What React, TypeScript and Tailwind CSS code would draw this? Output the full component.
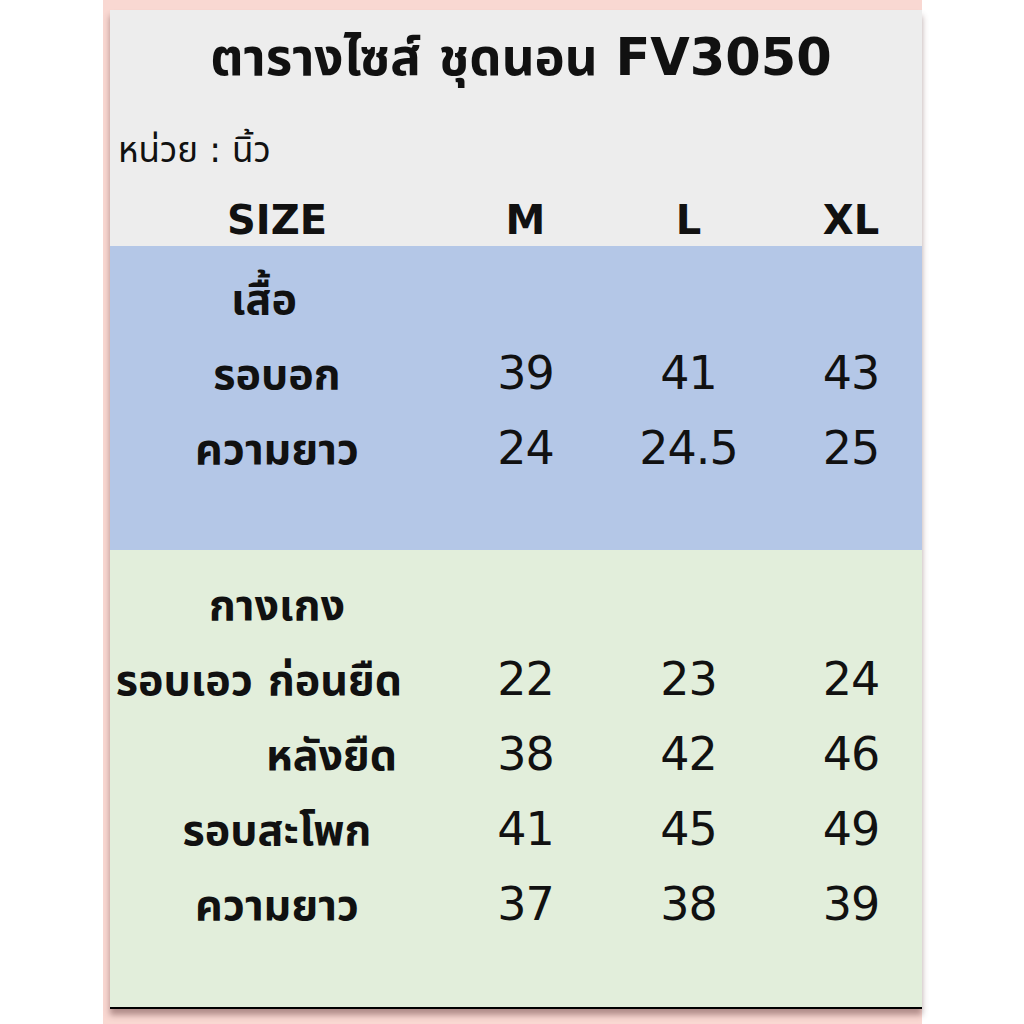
const font = "font-['Tahoma','DejaVu_Sans','Noto_Sans_Thai','Noto_Sans',sans-serif]";

type Row = { label: string; labelClass: string; values: string[] };

const shirt: Row[] = [
  { label: 'เสื้อ', labelClass: 'justify-center pr-[26px]', values: [] },
  { label: 'รอบอก', labelClass: 'justify-center', values: ['39', '41', '43'] },
  { label: 'ความยาว', labelClass: 'justify-center', values: ['24', '24.5', '25'] },
];

const pants: Row[] = [
  { label: 'กางเกง', labelClass: 'justify-center', values: [] },
  { label: 'รอบเอว ก่อนยืด', labelClass: 'justify-end pr-[42px]', values: ['22', '23', '24'] },
  { label: 'หลังยืด', labelClass: 'justify-end pr-[47px]', values: ['38', '42', '46'] },
  { label: 'รอบสะโพก', labelClass: 'justify-center', values: ['41', '45', '49'] },
  { label: 'ความยาว', labelClass: 'justify-center', values: ['37', '38', '39'] },
];

function TableRow({ row }: { row: Row }) {
  return (
    <div className="grid grid-cols-[334px_163px_163px_152px] h-[75px] items-center">
      <div className={`flex ${row.labelClass} text-[43px] leading-[50px] font-bold whitespace-nowrap`}>
        {row.label}
      </div>
      {row.values.map((v, i) => (
        <div
          key={i}
          className={`text-center text-[46px] tracking-[-1px] ${i === 2 ? 'pl-[10px]' : ''}`}
        >
          {v}
        </div>
      ))}
    </div>
  );
}

export default function App() {
  return (
    <div className={`w-[1024px] h-[1024px] bg-white text-[#111] ${font}`}>
      <div className="ml-[103px] w-[819px] h-[1024px] bg-[#f9d8d2] pt-[10px] pl-[7px]">
        <div className="w-[812px] border-b-2 border-black shadow-[0_6px_6px_rgba(90,50,50,0.45)]">
          {/* header */}
          <div className="bg-[#ededed] h-[236px]">
            <div className="h-[96px] flex items-center justify-center pl-[10px] text-[51px] leading-[60px] font-bold whitespace-nowrap">
              ตารางไซส์ ชุดนอน FV3050
            </div>
            <div className="h-[84px] pt-[24px] pl-[8px] text-[35px] leading-[40px]">หน่วย : นิ้ว</div>
            <div className="grid grid-cols-[334px_163px_163px_152px] h-[56px] items-center text-[40px] font-bold">
              <div className="text-center">SIZE</div>
              <div className="text-center">M</div>
              <div className="text-center">L</div>
              <div className="text-center pl-[10px]">XL</div>
            </div>
          </div>

          {/* shirt */}
          <div className="bg-[#b4c7e7] h-[304px] pt-[15px]">
            {shirt.map((r, i) => (
              <TableRow key={i} row={r} />
            ))}
          </div>

          {/* pants */}
          <div className="bg-[#e2eedb] h-[457px] pt-[17px]">
            {pants.map((r, i) => (
              <TableRow key={i} row={r} />
            ))}
          </div>
        </div>
      </div>
    </div>
  );
}
